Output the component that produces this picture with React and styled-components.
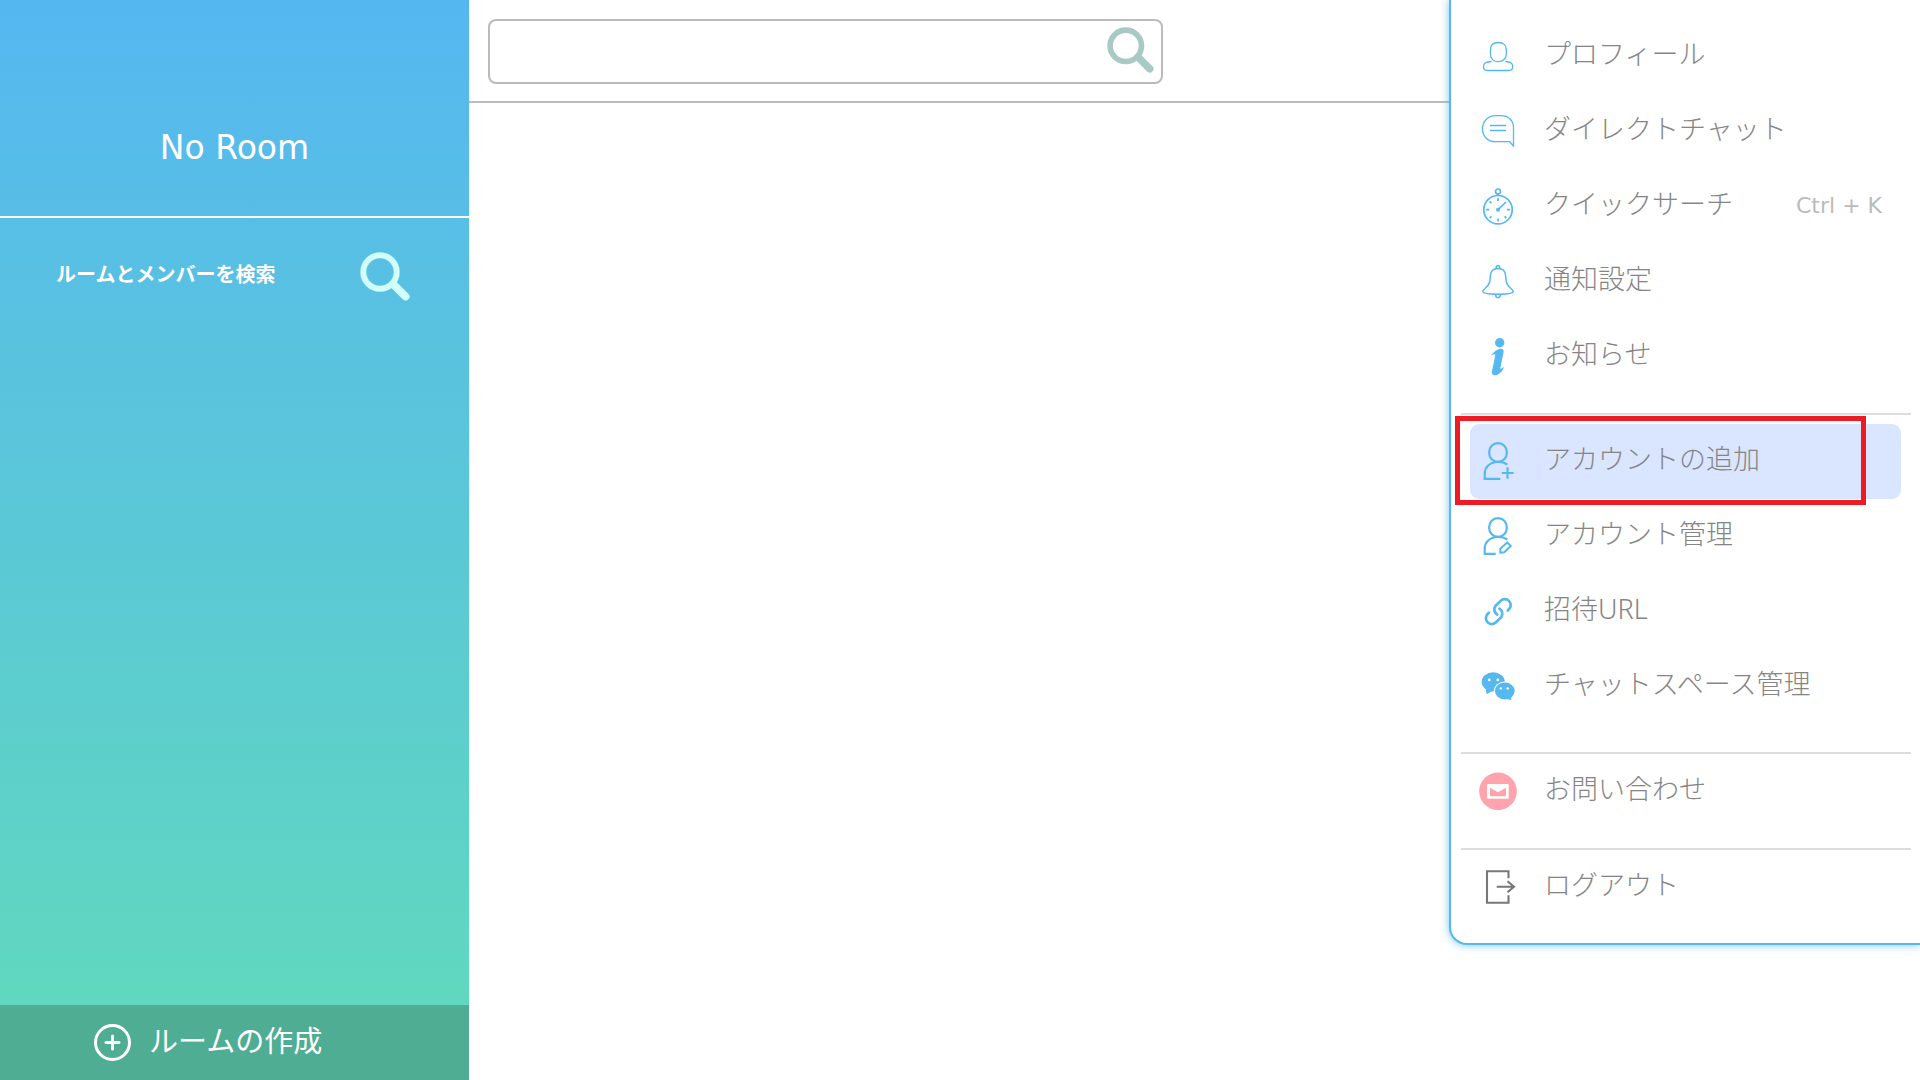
import React from 'react'
import styled, { createGlobalStyle } from 'styled-components'


const GlobalStyle = createGlobalStyle`
  * {
    box-sizing: border-box;
  }

  body {
    margin: 0;
    background-color: #FFFFFF;
    font-family: "Noto Sans", "Noto Sans CJK JP", sans-serif;
  }

  button, input {
    font-family: inherit;
  }
`

const Page = styled.div`
  position: relative;
  display: flex;
  min-height: 100vh;
`

const Sidebar = styled.aside`
  display: flex;
  flex-direction: column;
  flex: 0 0 469px;
  background: linear-gradient(#55B7F1, #61DABB);
`

const RoomHeader = styled.header`
  display: flex;
  align-items: flex-end;
  justify-content: center;
  height: 218px;
  padding-bottom: 44px;
  border-bottom: 2px solid #FFFFFF;
`

const RoomTitle = styled.h1`
  margin: 0;
  color: #FFFFFF;
  font-family: "DejaVu Sans", "Noto Sans CJK JP", sans-serif;
  font-size: 33px;
  font-weight: 400;
  line-height: 48px;
`

const RoomSearch = styled.button`
  display: flex;
  align-items: center;
  justify-content: space-between;
  padding: 34px 59px 32px 56px;
  border: 0;
  background: none;
  color: #FFFFFF;
  font-size: 20px;
  font-weight: 700;
  line-height: 32px;
  cursor: pointer;
`

const RoomSearchLabel = styled.span`
  padding-bottom: 4px;
`

const CreateRoom = styled.button`
  display: flex;
  align-items: center;
  gap: 17px;
  height: 75px;
  margin-top: auto;
  padding: 0 93px;
  border: 0;
  background-color: #4EAD93;
  color: #FFFFFF;
  font-size: 29px;
  line-height: 40px;
  cursor: pointer;
`

const CreateLabel = styled.span`
  padding-bottom: 4px;
`

const Main = styled.main`
  flex: 1;
`

const TopBar = styled.div`
  padding: 19px 19px 17px;
  border-bottom: 2px solid #BBBBBB;
`

const SearchBox = styled.form`
  display: flex;
  align-items: center;
  max-width: 675px;
  height: 65px;
  padding-right: 7px;
  border: 2px solid #BBBBBB;
  border-radius: 8px;
`

const SearchInput = styled.input`
  flex: 1;
  height: 100%;
  padding: 0 16px;
  border: 0;
  outline: 0;
  background: none;
  font-size: 27px;
`

const SearchButton = styled.button`
  display: flex;
  padding: 0 0 2px;
  border: 0;
  background: none;
  cursor: pointer;
`

const Menu = styled.nav`
  position: absolute;
  top: 0;
  right: 0;
  width: 471px;
  padding: 19px 9px 0 10px;
  border: solid #55B8F0;
  border-width: 0 0 2px 2px;
  border-bottom-left-radius: 18px;
  background-color: #FFFFFF;
  box-shadow: 0 0 8px rgba(85, 184, 240, 0.8);
`

const MenuGroup = styled.ul`
  margin: 0;
  padding: ${props => props.$roomy ? '9px 10px 28px 9px' : '0 10px 19px 9px'};
  list-style: none;

  & + & {
    border-top: 2px solid #DDDDDD;
  }

  &:last-child {
    padding-bottom: 18px;
  }
`

const MenuItem = styled.li`
  position: relative;
`

const MenuButton = styled.button`
  display: flex;
  align-items: center;
  gap: 26px;
  width: 100%;
  height: 75px;
  padding: 0 19px 0 9px;
  border: 0;
  border-radius: 9px;
  background-color: ${props => props.$active ? '#DAE6FF' : 'transparent'};
  color: #858585;
  font-size: 27px;
  font-weight: 300;
  line-height: 40px;
  text-align: left;
  white-space: nowrap;
  cursor: pointer;
`

const MenuLabel = styled.span`
  flex: 1;
  padding-bottom: 6px;
`

const Shortcut = styled.kbd`
  padding-bottom: 2px;
  color: #BBBBBB;
  font-family: "DejaVu Sans", sans-serif;
  font-size: 22px;
  font-weight: 400;
`

const Marker = styled.div`
  position: absolute;
  top: -8px;
  right: 35px;
  bottom: -6px;
  left: -15px;
  border: 5px solid #ED1C24;
  pointer-events: none;
`

const IconSvg = styled.svg`
  flex: none;
  width: 39px;
  height: 39px;
  fill: none;
  stroke: #55B8F0;
  stroke-width: ${props => props.$weight || 1};
`

const Glass = styled.svg`
  flex: none;
  width: ${props => props.$size}px;
  height: ${props => props.$size}px;
  fill: none;
  stroke: ${props => props.$color};
  stroke-width: 6;
  stroke-linecap: round;
`

const SearchIcon = ({ size, color }) => (
  <Glass viewBox="0 0 50 50" $size={size} $color={color} aria-hidden="true">
    <circle cx="20" cy="20" r="16.7" />
    <path d="M33 32 L45.5 44.5" strokeWidth="8" />
  </Glass>
)

const PlusIcon = () => (
  <svg width="39" height="39" viewBox="0 0 39 39" fill="none" stroke="#FFFFFF" strokeWidth="3" aria-hidden="true">
    <circle cx="19.5" cy="19.5" r="17" />
    <path d="M19.5 13 V26 M13 19.5 H26" strokeLinecap="round" />
  </svg>
)

const ProfileIcon = () => (
  <IconSvg $weight={1.3}>
    <path d="M19.3 5.5 C14 5.5 11.5 8.5 11.5 12.5 V17.5 C11.5 21.5 14.5 24.7 19.3 24.7 C24 24.7 27.3 21.5 27.3 17.5 V12.5 C27.3 8.5 24.6 5.5 19.3 5.5 Z" />
    <path d="M12.5 24.5 C8 25 4.5 25.5 4.5 29.5 C4.5 32 5 33.5 8 33.5 H30 C33 33.5 33.7 32 33.7 29.5 C33.7 25.5 30.5 25 26.3 24.5" />
  </IconSvg>
)

const ChatIcon = () => (
  <IconSvg $weight={1.3}>
    <path d="M16.5 3.7 H22 C29.5 3.7 34.5 8.5 34.5 15.5 V34 L30.5 29.7 H16.5 C8.5 29.7 3.5 24 3.5 16.7 C3.5 9.4 9 3.7 16.5 3.7 Z" />
    <path d="M11 13.5 H27 M11 18.5 H27" strokeWidth="1.5" />
  </IconSvg>
)

const StopwatchIcon = () => (
  <IconSvg $weight={1.7}>
    <circle cx="19" cy="22.7" r="14.2" />
    <circle cx="19" cy="4.5" r="2.5" />
    <path d="M19 7 V8.6 M19 11 V14 M19 31.5 V34.5 M7 22.7 H10.2 M27.8 22.7 H31 M10.6 14.3 L12.4 16.1 M25.6 29.3 L27.4 31.1 M10.6 31.1 L12.4 29.3" />
    <path d="M19 22.7 L27 15" />
    <circle cx="19" cy="22.7" r="2" fill="#55B8F0" stroke="none" />
  </IconSvg>
)

const BellIcon = () => (
  <IconSvg $weight={1.5}>
    <path d="M19 6.4 C14 6.4 11.6 9.5 11.4 13.5 C11.2 20 10.5 22.5 6.5 26 C4.5 27.8 3.8 28.8 3.8 29.6 C3.8 31.5 10 32.3 19 32.3 C28 32.3 34.2 31.5 34.2 29.6 C34.2 28.8 33.5 27.8 31.5 26 C27.5 22.5 26.8 20 26.6 13.5 C26.4 9.5 24 6.4 19 6.4 Z" />
    <path d="M17.2 6.5 C16.8 2.5 21.2 2.5 20.8 6.5 M16.5 32.5 C16.8 36.7 21.2 36.7 21.5 32.5" />
  </IconSvg>
)

const InfoIcon = () => (
  <IconSvg>
    <g fill="#55B8F0" stroke="none">
      <circle cx="20.7" cy="5.7" r="4.7" />
      <path d="M12.2 18.2 C15.5 14 18.5 11.8 22.1 11.8 C24.3 11.8 24.9 13.3 24.5 15.5 L21.4 30.5 C21.2 31.6 21.7 31.9 22.5 31.6 C23.4 31.2 24.2 30.4 25.2 29.7 C23.7 33.6 20 38.2 15.9 38.2 C13.3 38.2 12.5 36.6 13 34 L16.2 18.8 C16.5 17.5 15.8 17.1 14.8 17.4 Z" />
    </g>
  </IconSvg>
)

const AddUserIcon = () => (
  <IconSvg $weight={2.2}>
    <ellipse cx="19" cy="10.5" rx="8.9" ry="9.4" />
    <path d="M28.3 22.5 C24 19.6 20.5 19.5 17 20 C10 21 5.7 25.5 5.7 32 V36.8 H21.3" />
    <path d="M28.5 25.3 V36.8 M22.7 31 H34.7" />
  </IconSvg>
)

const EditUserIcon = () => (
  <IconSvg $weight={2.2}>
    <ellipse cx="19" cy="10.5" rx="8.9" ry="9.4" />
    <path d="M28.3 22.5 C24 19.6 20.5 19.5 17 20 C10 21 5.7 25.5 5.7 32 V36.8 H16.7" />
    <path d="M21.3 31.8 L28.2 25.4 L31.8 29 L25.2 35.2 L21.3 35.8 Z" strokeLinejoin="round" strokeWidth="2" />
  </IconSvg>
)

const LinkIcon = () => (
  <IconSvg $weight={2.7} strokeLinecap="round">
    <path d="M28.7 18.6 L30 17.2 A5.9 5.9 0 0 0 21.6 8.9 L16.4 14 A5.9 5.9 0 0 0 18.2 22.5" />
    <path d="M28.7 18.6 L30 17.2 A5.9 5.9 0 0 0 21.6 8.9 L16.4 14 A5.9 5.9 0 0 0 18.2 22.5" transform="rotate(180 19.3 19.6)" />
  </IconSvg>
)

const BubblesIcon = () => (
  <IconSvg>
    <g fill="#55B8F0" stroke="none">
      <ellipse cx="14.2" cy="14.8" rx="11.5" ry="9.6" />
      <path d="M6.5 20 L7.7 27.2 L14 23.5 Z" />
      <ellipse cx="25.8" cy="24" rx="10.9" ry="9.5" fill="#FFFFFF" />
      <ellipse cx="25.8" cy="24" rx="9.9" ry="8.4" />
      <path d="M26 31.8 L32.3 33 L32 28.5 Z" />
      <g fill="#FFFFFF">
        <circle cx="10.3" cy="12.9" r="1.4" />
        <circle cx="18.8" cy="12.9" r="1.4" />
        <circle cx="21.7" cy="21.4" r="1.2" />
        <circle cx="28.7" cy="21.4" r="1.2" />
      </g>
    </g>
  </IconSvg>
)

const MailIcon = () => (
  <IconSvg>
    <g stroke="none">
      <circle cx="19" cy="19.3" r="18.8" fill="#FFA3AC" />
      <rect x="8" y="12" width="21.7" height="14.8" rx="1" fill="#FFFFFF" />
      <path d="M11 15.8 L19 20.2 L27 15.8 V23.3 Q27 24.3 26 24.3 H12 Q11 24.3 11 23.3 Z" fill="#FFA3AC" />
    </g>
  </IconSvg>
)

const LogoutIcon = () => (
  <IconSvg $weight={2.1}>
    <path d="M29.5 10.3 V3.2 H8 V34.8 H29.5 V27.3 M17.7 18.7 H35 M28.5 13.2 L35 18.7 L28.5 24.2" stroke="#777777" />
  </IconSvg>
)

const menuGroups = [
  {
    name: 'general',
    items: [
      { label: 'プロフィール', icon: ProfileIcon },
      { label: 'ダイレクトチャット', icon: ChatIcon },
      { label: 'クイックサーチ', icon: StopwatchIcon, shortcut: 'Ctrl + K' },
      { label: '通知設定', icon: BellIcon },
      { label: 'お知らせ', icon: InfoIcon }
    ]
  },
  {
    name: 'account',
    roomy: true,
    items: [
      { label: 'アカウントの追加', icon: AddUserIcon, active: true },
      { label: 'アカウント管理', icon: EditUserIcon },
      { label: '招待URL', icon: LinkIcon },
      { label: 'チャットスペース管理', icon: BubblesIcon }
    ]
  },
  { name: 'contact', items: [{ label: 'お問い合わせ', icon: MailIcon }] },
  { name: 'session', items: [{ label: 'ログアウト', icon: LogoutIcon }] }
]

const renderItem = ({ label, icon: Icon, shortcut, active }) => (
  <MenuItem key={label}>
    <MenuButton type="button" $active={active}>
      <Icon />
      <MenuLabel>{label}</MenuLabel>
      {shortcut && <Shortcut>{shortcut}</Shortcut>}
    </MenuButton>
    {active && <Marker />}
  </MenuItem>
)

const App = () => (
  <Page>
    <GlobalStyle />
    <Sidebar>
      <RoomHeader>
        <RoomTitle>No Room</RoomTitle>
      </RoomHeader>
      <RoomSearch type="button">
        <RoomSearchLabel>ルームとメンバーを検索</RoomSearchLabel>
        <SearchIcon size={50} color="#D0FFFC" />
      </RoomSearch>
      <CreateRoom type="button">
        <PlusIcon />
        <CreateLabel>ルームの作成</CreateLabel>
      </CreateRoom>
    </Sidebar>
    <Main>
      <TopBar>
        <SearchBox role="search">
          <SearchInput type="text" aria-label="検索" />
          <SearchButton type="button" aria-label="検索">
            <SearchIcon size={47} color="#A9C9C4" />
          </SearchButton>
        </SearchBox>
      </TopBar>
    </Main>
    <Menu>
      {menuGroups.map((group) => (
        <MenuGroup key={group.name} $roomy={group.roomy}>
          {group.items.map(renderItem)}
        </MenuGroup>
      ))}
    </Menu>
  </Page>
)

export default App
